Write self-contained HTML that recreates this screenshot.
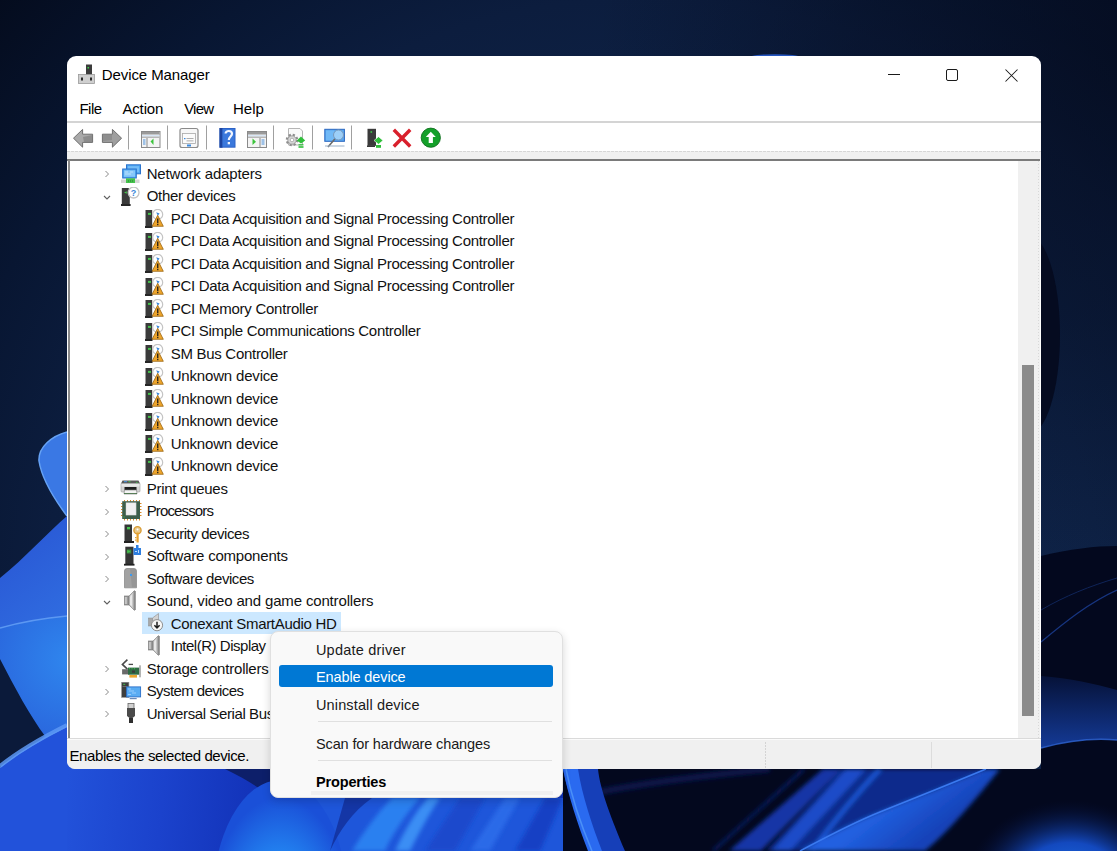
<!DOCTYPE html>
<html><head><meta charset="utf-8">
<style>
html,body{margin:0;padding:0;width:1117px;height:851px;overflow:hidden;background:#0b1a36;font-family:"Liberation Sans", sans-serif;}
.abs{position:absolute}
.t{position:absolute;font-size:14.3px;line-height:22.5px;color:#000;white-space:nowrap}
.mi{position:absolute;font-size:14.3px;color:#1a1a1a;white-space:nowrap;line-height:20px}
.cm{position:absolute;font-size:14.2px;color:#1a1a1a;white-space:nowrap;line-height:20px;left:317px}
</style></head><body>
<div id="wall" class="abs" style="left:0;top:0;width:1117px;height:851px">
<svg width="1117" height="851" viewBox="0 0 1117 851">
<defs>
 <radialGradient id="gTop" cx="650" cy="600" r="900" gradientUnits="userSpaceOnUse">
  <stop offset="0" stop-color="#12284f"/>
  <stop offset="0.5" stop-color="#0e2246"/>
  <stop offset="0.67" stop-color="#0c1d3e"/>
  <stop offset="0.8" stop-color="#081632"/>
  <stop offset="1" stop-color="#040b1c"/>
 </radialGradient>
 <linearGradient id="gB" x1="0" y1="560" x2="67" y2="640" gradientUnits="userSpaceOnUse">
  <stop offset="0" stop-color="#2a5ad6"/>
  <stop offset="1" stop-color="#3170e2"/>
 </linearGradient>
 <radialGradient id="gC" cx="70" cy="660" r="80" gradientUnits="userSpaceOnUse">
  <stop offset="0" stop-color="#2f86ee"/>
  <stop offset="1" stop-color="#2a68de"/>
 </radialGradient>
 <linearGradient id="gD" x1="67" y1="780" x2="260" y2="800" gradientUnits="userSpaceOnUse">
  <stop offset="0" stop-color="#2252da"/>
  <stop offset="0.5" stop-color="#1b42cc"/>
  <stop offset="1" stop-color="#1232b8"/>
 </linearGradient>
 <radialGradient id="gSph" cx="0.5" cy="0.62" r="0.55">
  <stop offset="0" stop-color="#2ab0ff"/>
  <stop offset="0.55" stop-color="#2386f2"/>
  <stop offset="1" stop-color="#1a50d8"/>
 </radialGradient>
 <radialGradient id="gBR" cx="0.5" cy="0.5" r="0.5">
  <stop offset="0" stop-color="#1f7cf0"/>
  <stop offset="0.5" stop-color="#1550d0" stop-opacity="0.9"/>
  <stop offset="1" stop-color="#06103a" stop-opacity="0"/>
 </radialGradient>
 <linearGradient id="gRB" x1="0" y1="676" x2="0" y2="748" gradientUnits="userSpaceOnUse">
  <stop offset="0" stop-color="#061238"/>
  <stop offset="1" stop-color="#143a96"/>
 </linearGradient>
 <linearGradient id="gBand" x1="880" y1="812" x2="910" y2="851" gradientUnits="userSpaceOnUse">
  <stop offset="0" stop-color="#2160e0"/>
  <stop offset="1" stop-color="#1642b8"/>
 </linearGradient>
 <radialGradient id="gRS" cx="1117" cy="60" r="520" gradientUnits="userSpaceOnUse">
  <stop offset="0" stop-color="#040a1c" stop-opacity="0.65"/>
  <stop offset="0.5" stop-color="#040a1c" stop-opacity="0.4"/>
  <stop offset="1" stop-color="#040a1c" stop-opacity="0"/>
 </radialGradient>
 <filter id="blur2" x="-10%" y="-10%" width="120%" height="120%"><feGaussianBlur stdDeviation="2"/></filter>
</defs>
<rect width="1117" height="851" fill="url(#gTop)"/>
<!-- right strip darker lower -->
<rect x="500" y="0" width="617" height="600" fill="url(#gRS)"/>
<ellipse cx="1028" cy="335" rx="32" ry="100" fill="#050b20"/>
<path d="M1041 556 C1070 549 1095 546 1117 546 L1117 851 L1041 851 Z" fill="#03081e"/>
<path d="M1041 642 C1065 622 1090 602 1117 590" fill="none" stroke="#173580" stroke-width="1.3"/>
<path d="M1041 610 C1065 596 1090 586 1117 578" fill="none" stroke="#0f2458" stroke-width="1"/>
<path d="M1041 676 C1070 678 1095 684 1117 690 L1117 740 C1095 738 1070 740 1041 748 Z" fill="url(#gRB)"/>
<path d="M1041 748 C1070 740 1095 738 1117 740" fill="none" stroke="#2f66d8" stroke-width="1.4" opacity="0.8"/>
<!-- left petals -->
<path d="M67 432 C52 436 38 447 39 461 C42 480 55 500 67 516 Z" fill="#3a78e4"/>
<path d="M67 432 C52 436 38 447 39 461 C42 480 55 500 67 516" fill="none" stroke="#66a2f4" stroke-width="1.5"/>
<path d="M0 578 C25 558 48 532 67 516 L67 640 L0 640 Z" fill="url(#gB)"/>
<path d="M0 628 C25 621 45 618 67 616 L67 740 L0 740 Z" fill="url(#gC)"/>
<path d="M0 628 C25 621 45 618 67 616" fill="none" stroke="#5c98f2" stroke-width="1.5"/>
<path d="M0 659 C15 688 30 716 45 736 L0 770 Z" fill="#0b1a3a"/>
<path d="M0 768 C20 752 45 738 67 727 L67 851 L0 851 Z" fill="#2050d8"/>
<path d="M0 768 C20 752 45 738 67 727" fill="none" stroke="#5a96f2" stroke-width="2"/>

<!-- bottom strip -->
<rect x="67" y="740" width="533" height="111" fill="url(#gD)"/>
<path d="M0 768 C20 752 45 738 67 727 L67 851 L0 851 Z" fill="#2252da"/>
<path d="M0 766 C20 750 45 736 67 725" fill="none" stroke="#5c98f4" stroke-width="4" opacity="0.85"/>
<path d="M225 769 L275 769 L275 800 C262 790 248 780 225 769 Z" fill="#0d1f6a"/>
<rect x="315" y="798" width="248" height="53" fill="#1e56da"/>
<g filter="url(#blur2)">
<path d="M352 851 C365 830 378 812 392 798 L420 798 C405 815 392 835 385 851 Z" fill="#2c80f0"/>
<path d="M395 851 C405 830 415 812 428 798 L440 798 C428 815 418 835 410 851 Z" fill="#3a8ef4"/>
<path d="M425 851 L460 798 L485 798 L455 851 Z" fill="#1a48cc"/>
<path d="M470 851 L505 798 L520 798 L490 851 Z" fill="#2a6ae8"/>
<path d="M515 851 L545 798 L563 798 L540 851 Z" fill="#1840c4"/>
</g>
<ellipse cx="280" cy="905" rx="68" ry="125" fill="url(#gSph)"/>
<path d="M330 851 C340 830 352 812 372 798 L345 798 Z" fill="#0f2a90" opacity="0.7"/>
<!-- right of menu -->
<rect x="563" y="769" width="478" height="82" fill="#03081e"/>
<g filter="url(#blur2)">
<path d="M600 792 C650 782 700 776 770 769" stroke="#0a1a58" stroke-width="7" opacity="0.7" fill="none"/>
<path d="M713 851 L804 769" stroke="#0c2270" stroke-width="2.5" fill="none"/>
<path d="M729 851 L823 769 L842 769 L761 851 Z" fill="#1236a6"/>
<path d="M766 851 L842 769 L986 769 L880 812 L800 851 Z" fill="#0e2c8c"/>
<path d="M772 851 L846 769 L866 769 L790 851 Z" fill="#1a4cc8"/>
<path d="M880 769 C860 790 835 820 812 851" stroke="#1f58d8" stroke-width="4" fill="none"/>
<path d="M800 851 C830 835 855 822 880 812 C920 796 955 782 986 769 L1000 769 C975 800 950 830 925 851 Z" fill="url(#gBand)"/>
</g>
<path d="M800 851 C830 835 855 822 880 812 C920 796 955 782 986 769" fill="none" stroke="#3a7af0" stroke-width="1.5"/>
<ellipse cx="1070" cy="885" rx="105" ry="85" fill="url(#gBR)"/>
<path d="M563 769 C568 795 580 825 590 851 L625 851 C612 820 600 790 598 769 Z" fill="#163fb8"/>
<path d="M563 769 C568 795 578 825 588 851 L602 851 C592 825 582 795 578 769 Z" fill="#2a6af0"/>
<path d="M566 769 C571 795 581 825 592 851" fill="none" stroke="#4a90f8" stroke-width="1.5"/>
<!-- glow above window -->
<ellipse cx="775" cy="57" rx="25" ry="2.8" fill="#2a62d8" opacity="0.85"/>
</svg>
</div>

<div id="win" class="abs" style="left:67px;top:56px;width:974px;height:713px;background:#fff;border-radius:9px;overflow:hidden">
</div>
<!-- window content in page coords -->
<div class="abs" style="left:0;top:0;width:1117px;height:851px">
  <!-- title icon -->
  <div class="abs" style="left:78px;top:64px;line-height:0">
  <svg width="17" height="20" viewBox="0 0 17 20">
   <rect x="8" y="0.5" width="6" height="11" fill="#3c3c3c"/>
   <rect x="9.5" y="3" width="1.5" height="1.5" fill="#3fd04a"/>
   <rect x="0.5" y="10.5" width="16" height="9" fill="#cfcfcf" stroke="#9a9a9a" stroke-width="0.8"/>
   <rect x="3" y="13.5" width="2" height="3" fill="#2a2a2a"/>
   <rect x="12" y="13.5" width="2" height="3" fill="#2a2a2a"/>
  </svg></div>
  <div style="position:absolute;left:101.75px;top:64.50px;font-size:15px;font-weight:400;line-height:20px;letter-spacing:-0.088px;color:#000;white-space:nowrap">Device Manager</div>
  <!-- caption buttons -->
  <svg class="abs" style="left:880px;top:60px" width="150" height="30" viewBox="0 0 150 30">
    <path d="M8 14.5 H20" stroke="#1a1a1a" stroke-width="1"/>
    <rect x="66.5" y="9.5" width="11" height="11" rx="1.5" fill="none" stroke="#1a1a1a" stroke-width="1"/>
    <path d="M125.5 9.5 L137.5 21.5 M137.5 9.5 L125.5 21.5" stroke="#1a1a1a" stroke-width="1.05"/>
  </svg>
  <!-- menu -->
  <div style="position:absolute;left:79.40px;top:98.50px;font-size:15px;font-weight:400;line-height:20px;letter-spacing:-0.500px;color:#000;white-space:nowrap">File</div><div style="position:absolute;left:122.40px;top:98.50px;font-size:15px;font-weight:400;line-height:20px;letter-spacing:-0.140px;color:#000;white-space:nowrap">Action</div><div style="position:absolute;left:184.20px;top:98.50px;font-size:15px;font-weight:400;line-height:20px;letter-spacing:-0.800px;color:#000;white-space:nowrap">View</div><div style="position:absolute;left:233.00px;top:98.50px;font-size:15px;font-weight:400;line-height:20px;letter-spacing:0.000px;color:#000;white-space:nowrap">Help</div>
  <div class="abs" style="left:67px;top:121px;width:974px;height:2px;background:#d4d4d4"></div>
  <!-- toolbar -->
  <svg style="position:absolute;left:0;top:0" width="460" height="160" viewBox="0 0 460 160">
<!-- separators -->
<g fill="#a0a0a0">
<rect x="128" y="125.5" width="1" height="24"/>
<rect x="167" y="125.5" width="1" height="24"/>
<rect x="206" y="125.5" width="1" height="24"/>
<rect x="273" y="125.5" width="1" height="24"/>
<rect x="312" y="125.5" width="1" height="24"/>
<rect x="351" y="125.5" width="1" height="24"/>
</g>
<!-- back arrow -->
<path d="M73.5 138.2 L82.6 129.4 L82.6 134.2 L92.6 134.2 L92.6 142.4 L82.6 142.4 L82.6 147.2 Z" fill="#a9a9a9" stroke="#6f6f6f" stroke-width="1" stroke-linejoin="round"/>
<path d="M83 137 L92 135 L92 142 L84 142 Z" fill="#7a7a7a" opacity="0.6"/>
<!-- forward arrow -->
<path d="M121.6 138.2 L112.4 129.4 L112.4 134.2 L102.4 134.2 L102.4 142.4 L112.4 142.4 L112.4 147.2 Z" fill="#9f9f9f" stroke="#6f6f6f" stroke-width="1" stroke-linejoin="round"/>
<path d="M103 135 L112 135 L112 140 L103 141 Z" fill="#7d7d7d" opacity="0.5"/>
<!-- show/hide tree -->
<rect x="141.5" y="131.5" width="18.5" height="16" fill="#f4f4f4" stroke="#8a8a8a" stroke-width="1"/>
<rect x="142" y="132" width="17.5" height="2.5" fill="#9a9a9a"/>
<rect x="142" y="135" width="17.5" height="1.5" fill="#d8e6f5"/>
<rect x="142" y="136.5" width="17.5" height="1.5" fill="#b8b8b8"/>
<rect x="146.5" y="138" width="1" height="9.5" fill="#8a8a8a"/>
<rect x="143" y="139.5" width="2.5" height="1" fill="#4a90d9"/>
<rect x="143" y="141.5" width="2.5" height="1" fill="#4a90d9"/>
<rect x="143" y="143.5" width="2.5" height="1" fill="#4a90d9"/>
<path d="M150.5 141.5 L153.5 138.5 L153.5 145 Z" fill="#3cc43c"/>
<!-- properties -->
<rect x="180" y="128.5" width="18" height="19" rx="2" fill="#f7f7f7" stroke="#8a8a8a" stroke-width="1.2"/>
<rect x="182.5" y="133.5" width="13" height="10" fill="#fbfbfb" stroke="#a8a8a8" stroke-width="0.8"/>
<rect x="184" y="138" width="1.5" height="1.2" fill="#3a8ae0"/>
<rect x="186.5" y="138.2" width="7" height="0.8" fill="#9a9a9a"/>
<rect x="186.5" y="140.5" width="7" height="0.8" fill="#9a9a9a"/>
<rect x="187" y="144.5" width="4" height="2" fill="#3a8ae0"/>
<!-- help book -->
<rect x="219.5" y="128" width="16" height="19.7" fill="#2d62c6"/>
<rect x="219.5" y="128" width="3" height="19.7" fill="#1c44a0"/>
<rect x="222.5" y="129" width="12" height="17.7" fill="#3a78dc"/>
<path d="M225.6 133.5 C225.6 130.2 232 130 232 133.8 C232 136.4 228.8 136.6 228.8 140" fill="none" stroke="#f2f6ff" stroke-width="2.2"/>
<rect x="227.7" y="142" width="2.3" height="2.3" fill="#f2f6ff"/>
<!-- action pane -->
<rect x="247.5" y="131.5" width="19" height="16" fill="#f4f4f4" stroke="#8a8a8a" stroke-width="1"/>
<rect x="248" y="132" width="18" height="2.5" fill="#9a9a9a"/>
<rect x="248" y="135" width="18" height="1.5" fill="#d8e6f5"/>
<rect x="248" y="136.5" width="18" height="1.5" fill="#b8b8b8"/>
<rect x="259.5" y="138" width="1" height="9.5" fill="#8a8a8a"/>
<rect x="261.5" y="139.5" width="3" height="1" fill="#4a90d9"/>
<rect x="261.5" y="141.5" width="3" height="1" fill="#4a90d9"/>
<rect x="261.5" y="143.5" width="3" height="1" fill="#4a90d9"/>
<path d="M252.5 138.5 L256 141.8 L252.5 145 Z" fill="#3cc43c"/>
<!-- gear + doc -->
<path d="M288.5 128.5 H300 L302.5 131 V145 H288.5 Z" fill="#fafafa" stroke="#b5b5b5" stroke-width="1"/>
<g transform="translate(292 140)">
<circle r="5.2" fill="none" stroke="#8e8e8e" stroke-width="2.2" stroke-dasharray="2.2 1.9"/>
<circle r="4.2" fill="#d8d8d8" stroke="#8e8e8e" stroke-width="0.8"/>
<circle r="1.8" fill="#fff" stroke="#9a9a9a" stroke-width="0.7"/>
</g>
<path d="M301 136.5 L305.2 140.5 L301 143.5 L296.8 140.5 Z" fill="#2fbf3a"/>
<rect x="298.5" y="144.2" width="5" height="1.2" fill="#2fbf3a"/>
<rect x="298.5" y="146.2" width="5" height="1.6" fill="#2fbf3a"/>
<!-- monitor + magnifier -->
<rect x="324.8" y="129.3" width="19.6" height="12" fill="#5aa8f0" stroke="#2a66c0" stroke-width="1"/>
<rect x="326" y="130.5" width="8" height="10" fill="#7ac0f8" opacity="0.7"/>
<circle cx="338.5" cy="135" r="5" fill="#9ccff8" stroke="#7a9abb" stroke-width="1"/>
<path d="M334.8 139 L328 147" stroke="#6a6a6a" stroke-width="1.6"/>
<rect x="325" y="145.5" width="19.5" height="1" fill="#9ab0c8"/>
<!-- update driver -->
<rect x="367.5" y="128.8" width="8.5" height="17" fill="#3a3a3a"/>
<rect x="367" y="145.5" width="8" height="1.4" fill="#222"/>
<rect x="370.5" y="131.2" width="1.6" height="1.6" fill="#3fd04a"/>
<path d="M378.5 136.7 L383 140.5 L378.5 144.2 L374 140.5 Z" fill="#2fbf3a" stroke="#fff" stroke-width="0.6"/>
<rect x="376" y="145" width="5" height="2.8" fill="#2fbf3a"/>
<!-- red X -->
<path d="M395 131 L409 145.3 M409 131 L395 145.3" stroke="#d9202c" stroke-width="3.4" stroke-linecap="square"/>
<!-- green up circle -->
<circle cx="430.8" cy="137.7" r="9.6" fill="#14a02a" stroke="#0d6d1c" stroke-width="0.9"/>
<path d="M430.8 131.8 L435.8 137 H432.9 V142.9 H428.7 V137 H425.8 Z" fill="#fff"/>
</svg>
  <div class="abs" style="left:67px;top:151px;width:974px;height:1px;background:repeating-linear-gradient(90deg,#d6d6d6 0 3px,#f0f0f0 3px 4px)"></div>
  <div class="abs" style="left:67px;top:152px;width:974px;height:8px;background:#f0f0f0"></div>
  <div class="abs" style="left:67px;top:159px;width:973px;height:2px;background:#7a7a7a"></div>
  <!-- tree left border -->
  <div class="abs" style="left:68px;top:160px;width:2px;height:579px;background:#8a8a8a"></div>
  <!-- scrollbar -->
  <div class="abs" style="left:1018px;top:161px;width:22px;height:577px;background:#f0f0f0"></div><div class="abs" style="left:1038px;top:161px;width:1px;height:577px;background:repeating-linear-gradient(180deg,#d8d8d8 0 1px,#f0f0f0 1px 3px)"></div>
  <div class="abs" style="left:1022px;top:365px;width:12px;height:351px;background:#8b8b8b"></div>
  <!-- tree -->
  <svg style="position:absolute;left:103px;top:169.0px" width="8" height="10" viewBox="0 0 8 10"><path d="M2.5 2 L5.5 5 L2.5 8" fill="none" stroke="#8a8a8a" stroke-width="1"/></svg>
<div style="position:absolute;left:121px;top:163.5px;line-height:0"><svg width="22" height="20" viewBox="0 0 22 20">
<rect x="5.5" y="0.8" width="14" height="9" fill="#4ea6f2" stroke="#2b73cc" stroke-width="1"/>
<rect x="7" y="2.2" width="11" height="6" fill="#74bdf7"/>
<rect x="1.7" y="5" width="13.6" height="9" fill="#52a8f2" stroke="#2b73cc" stroke-width="1"/>
<rect x="3" y="6.3" width="11" height="6.5" fill="#86c8fa"/>
<path d="M4 8 h3 M4 10 h6 M9 8 h3" stroke="#c8e6ff" stroke-width="0.8"/>
<rect x="0" y="15.5" width="18.5" height="3.5" fill="#d6d6d6"/>
<rect x="5" y="14.3" width="9" height="4.7" fill="#45c24c"/>
<rect x="7" y="16.5" width="1" height="1" fill="#2a7a2e"/><rect x="9" y="16.5" width="1" height="1" fill="#2a7a2e"/><rect x="11" y="16.5" width="1" height="1" fill="#2a7a2e"/>
</svg></div>
<div style="position:absolute;left:146.70px;top:163.90px;font-size:15px;font-weight:400;line-height:20px;letter-spacing:-0.147px;color:#111;white-space:nowrap">Network adapters</div>
<svg style="position:absolute;left:102px;top:193.5px" width="10" height="8" viewBox="0 0 10 8"><path d="M2 2 L5 5 L8 2" fill="none" stroke="#606060" stroke-width="1.1"/></svg>
<div style="position:absolute;left:121px;top:186.5px;line-height:0"><svg width="20" height="20" viewBox="0 0 20 20">
<path d="M0.8 1 H7.5 L8.8 3 V17.5 H0.8 Z" fill="#3a3a3a"/>
<rect x="0" y="17" width="9.6" height="2" fill="#262626"/>
<path d="M3 5.5 L5.8 4.3 V6.7 Z" fill="#45c24c"/>
<circle cx="12.6" cy="5.6" r="5.4" fill="#fff" stroke="#c4c4c4" stroke-width="1.3"/>
<text x="12.6" y="9" font-family="Liberation Sans" font-size="9" font-weight="700" fill="#3a86d8" text-anchor="middle">?</text>
</svg></div>
<div style="position:absolute;left:146.70px;top:186.40px;font-size:15px;font-weight:400;line-height:20px;letter-spacing:-0.292px;color:#111;white-space:nowrap">Other devices</div>
<div style="position:absolute;left:145px;top:209.0px;line-height:0"><svg width="20" height="20" viewBox="0 0 20 20">
<path d="M0.5 1 H7.2 V17.5 H0.5 Z" fill="#3a3a3a"/>
<rect x="0" y="17" width="7.5" height="2" fill="#262626"/>
<rect x="3" y="3.9" width="3" height="2" fill="#45c24c"/>
<circle cx="12.7" cy="5.4" r="5" fill="#fff" stroke="#c4c4c4" stroke-width="1.2"/>
<path d="M11.2 3.2 L14.6 4.4 L12.8 6.8 Z" fill="#3a86d8"/>
<path d="M12.7 6.3 L18.3 17.3 H7.1 Z" fill="#eea52c" stroke="#9a6410" stroke-width="0.8" stroke-linejoin="round"/>
<rect x="12.1" y="9.5" width="1.3" height="4.6" fill="#1a1a1a"/>
<rect x="12.1" y="14.8" width="1.3" height="1.4" fill="#1a1a1a"/>
</svg></div>
<div style="position:absolute;left:170.70px;top:208.90px;font-size:15px;font-weight:400;line-height:20px;letter-spacing:-0.300px;color:#111;white-space:nowrap">PCI Data Acquisition and Signal Processing Controller</div>
<div style="position:absolute;left:145px;top:231.5px;line-height:0"><svg width="20" height="20" viewBox="0 0 20 20">
<path d="M0.5 1 H7.2 V17.5 H0.5 Z" fill="#3a3a3a"/>
<rect x="0" y="17" width="7.5" height="2" fill="#262626"/>
<rect x="3" y="3.9" width="3" height="2" fill="#45c24c"/>
<circle cx="12.7" cy="5.4" r="5" fill="#fff" stroke="#c4c4c4" stroke-width="1.2"/>
<path d="M11.2 3.2 L14.6 4.4 L12.8 6.8 Z" fill="#3a86d8"/>
<path d="M12.7 6.3 L18.3 17.3 H7.1 Z" fill="#eea52c" stroke="#9a6410" stroke-width="0.8" stroke-linejoin="round"/>
<rect x="12.1" y="9.5" width="1.3" height="4.6" fill="#1a1a1a"/>
<rect x="12.1" y="14.8" width="1.3" height="1.4" fill="#1a1a1a"/>
</svg></div>
<div style="position:absolute;left:170.70px;top:231.40px;font-size:15px;font-weight:400;line-height:20px;letter-spacing:-0.300px;color:#111;white-space:nowrap">PCI Data Acquisition and Signal Processing Controller</div>
<div style="position:absolute;left:145px;top:254.0px;line-height:0"><svg width="20" height="20" viewBox="0 0 20 20">
<path d="M0.5 1 H7.2 V17.5 H0.5 Z" fill="#3a3a3a"/>
<rect x="0" y="17" width="7.5" height="2" fill="#262626"/>
<rect x="3" y="3.9" width="3" height="2" fill="#45c24c"/>
<circle cx="12.7" cy="5.4" r="5" fill="#fff" stroke="#c4c4c4" stroke-width="1.2"/>
<path d="M11.2 3.2 L14.6 4.4 L12.8 6.8 Z" fill="#3a86d8"/>
<path d="M12.7 6.3 L18.3 17.3 H7.1 Z" fill="#eea52c" stroke="#9a6410" stroke-width="0.8" stroke-linejoin="round"/>
<rect x="12.1" y="9.5" width="1.3" height="4.6" fill="#1a1a1a"/>
<rect x="12.1" y="14.8" width="1.3" height="1.4" fill="#1a1a1a"/>
</svg></div>
<div style="position:absolute;left:170.70px;top:253.90px;font-size:15px;font-weight:400;line-height:20px;letter-spacing:-0.300px;color:#111;white-space:nowrap">PCI Data Acquisition and Signal Processing Controller</div>
<div style="position:absolute;left:145px;top:276.5px;line-height:0"><svg width="20" height="20" viewBox="0 0 20 20">
<path d="M0.5 1 H7.2 V17.5 H0.5 Z" fill="#3a3a3a"/>
<rect x="0" y="17" width="7.5" height="2" fill="#262626"/>
<rect x="3" y="3.9" width="3" height="2" fill="#45c24c"/>
<circle cx="12.7" cy="5.4" r="5" fill="#fff" stroke="#c4c4c4" stroke-width="1.2"/>
<path d="M11.2 3.2 L14.6 4.4 L12.8 6.8 Z" fill="#3a86d8"/>
<path d="M12.7 6.3 L18.3 17.3 H7.1 Z" fill="#eea52c" stroke="#9a6410" stroke-width="0.8" stroke-linejoin="round"/>
<rect x="12.1" y="9.5" width="1.3" height="4.6" fill="#1a1a1a"/>
<rect x="12.1" y="14.8" width="1.3" height="1.4" fill="#1a1a1a"/>
</svg></div>
<div style="position:absolute;left:170.70px;top:276.40px;font-size:15px;font-weight:400;line-height:20px;letter-spacing:-0.300px;color:#111;white-space:nowrap">PCI Data Acquisition and Signal Processing Controller</div>
<div style="position:absolute;left:145px;top:299.0px;line-height:0"><svg width="20" height="20" viewBox="0 0 20 20">
<path d="M0.5 1 H7.2 V17.5 H0.5 Z" fill="#3a3a3a"/>
<rect x="0" y="17" width="7.5" height="2" fill="#262626"/>
<rect x="3" y="3.9" width="3" height="2" fill="#45c24c"/>
<circle cx="12.7" cy="5.4" r="5" fill="#fff" stroke="#c4c4c4" stroke-width="1.2"/>
<path d="M11.2 3.2 L14.6 4.4 L12.8 6.8 Z" fill="#3a86d8"/>
<path d="M12.7 6.3 L18.3 17.3 H7.1 Z" fill="#eea52c" stroke="#9a6410" stroke-width="0.8" stroke-linejoin="round"/>
<rect x="12.1" y="9.5" width="1.3" height="4.6" fill="#1a1a1a"/>
<rect x="12.1" y="14.8" width="1.3" height="1.4" fill="#1a1a1a"/>
</svg></div>
<div style="position:absolute;left:170.70px;top:298.90px;font-size:15px;font-weight:400;line-height:20px;letter-spacing:-0.250px;color:#111;white-space:nowrap">PCI Memory Controller</div>
<div style="position:absolute;left:145px;top:321.5px;line-height:0"><svg width="20" height="20" viewBox="0 0 20 20">
<path d="M0.5 1 H7.2 V17.5 H0.5 Z" fill="#3a3a3a"/>
<rect x="0" y="17" width="7.5" height="2" fill="#262626"/>
<rect x="3" y="3.9" width="3" height="2" fill="#45c24c"/>
<circle cx="12.7" cy="5.4" r="5" fill="#fff" stroke="#c4c4c4" stroke-width="1.2"/>
<path d="M11.2 3.2 L14.6 4.4 L12.8 6.8 Z" fill="#3a86d8"/>
<path d="M12.7 6.3 L18.3 17.3 H7.1 Z" fill="#eea52c" stroke="#9a6410" stroke-width="0.8" stroke-linejoin="round"/>
<rect x="12.1" y="9.5" width="1.3" height="4.6" fill="#1a1a1a"/>
<rect x="12.1" y="14.8" width="1.3" height="1.4" fill="#1a1a1a"/>
</svg></div>
<div style="position:absolute;left:170.70px;top:321.40px;font-size:15px;font-weight:400;line-height:20px;letter-spacing:-0.286px;color:#111;white-space:nowrap">PCI Simple Communications Controller</div>
<div style="position:absolute;left:145px;top:344.0px;line-height:0"><svg width="20" height="20" viewBox="0 0 20 20">
<path d="M0.5 1 H7.2 V17.5 H0.5 Z" fill="#3a3a3a"/>
<rect x="0" y="17" width="7.5" height="2" fill="#262626"/>
<rect x="3" y="3.9" width="3" height="2" fill="#45c24c"/>
<circle cx="12.7" cy="5.4" r="5" fill="#fff" stroke="#c4c4c4" stroke-width="1.2"/>
<path d="M11.2 3.2 L14.6 4.4 L12.8 6.8 Z" fill="#3a86d8"/>
<path d="M12.7 6.3 L18.3 17.3 H7.1 Z" fill="#eea52c" stroke="#9a6410" stroke-width="0.8" stroke-linejoin="round"/>
<rect x="12.1" y="9.5" width="1.3" height="4.6" fill="#1a1a1a"/>
<rect x="12.1" y="14.8" width="1.3" height="1.4" fill="#1a1a1a"/>
</svg></div>
<div style="position:absolute;left:170.70px;top:343.90px;font-size:15px;font-weight:400;line-height:20px;letter-spacing:-0.287px;color:#111;white-space:nowrap">SM Bus Controller</div>
<div style="position:absolute;left:145px;top:366.5px;line-height:0"><svg width="20" height="20" viewBox="0 0 20 20">
<path d="M0.5 1 H7.2 V17.5 H0.5 Z" fill="#3a3a3a"/>
<rect x="0" y="17" width="7.5" height="2" fill="#262626"/>
<rect x="3" y="3.9" width="3" height="2" fill="#45c24c"/>
<circle cx="12.7" cy="5.4" r="5" fill="#fff" stroke="#c4c4c4" stroke-width="1.2"/>
<path d="M11.2 3.2 L14.6 4.4 L12.8 6.8 Z" fill="#3a86d8"/>
<path d="M12.7 6.3 L18.3 17.3 H7.1 Z" fill="#eea52c" stroke="#9a6410" stroke-width="0.8" stroke-linejoin="round"/>
<rect x="12.1" y="9.5" width="1.3" height="4.6" fill="#1a1a1a"/>
<rect x="12.1" y="14.8" width="1.3" height="1.4" fill="#1a1a1a"/>
</svg></div>
<div style="position:absolute;left:170.70px;top:366.40px;font-size:15px;font-weight:400;line-height:20px;letter-spacing:-0.177px;color:#111;white-space:nowrap">Unknown device</div>
<div style="position:absolute;left:145px;top:389.0px;line-height:0"><svg width="20" height="20" viewBox="0 0 20 20">
<path d="M0.5 1 H7.2 V17.5 H0.5 Z" fill="#3a3a3a"/>
<rect x="0" y="17" width="7.5" height="2" fill="#262626"/>
<rect x="3" y="3.9" width="3" height="2" fill="#45c24c"/>
<circle cx="12.7" cy="5.4" r="5" fill="#fff" stroke="#c4c4c4" stroke-width="1.2"/>
<path d="M11.2 3.2 L14.6 4.4 L12.8 6.8 Z" fill="#3a86d8"/>
<path d="M12.7 6.3 L18.3 17.3 H7.1 Z" fill="#eea52c" stroke="#9a6410" stroke-width="0.8" stroke-linejoin="round"/>
<rect x="12.1" y="9.5" width="1.3" height="4.6" fill="#1a1a1a"/>
<rect x="12.1" y="14.8" width="1.3" height="1.4" fill="#1a1a1a"/>
</svg></div>
<div style="position:absolute;left:170.70px;top:388.90px;font-size:15px;font-weight:400;line-height:20px;letter-spacing:-0.177px;color:#111;white-space:nowrap">Unknown device</div>
<div style="position:absolute;left:145px;top:411.5px;line-height:0"><svg width="20" height="20" viewBox="0 0 20 20">
<path d="M0.5 1 H7.2 V17.5 H0.5 Z" fill="#3a3a3a"/>
<rect x="0" y="17" width="7.5" height="2" fill="#262626"/>
<rect x="3" y="3.9" width="3" height="2" fill="#45c24c"/>
<circle cx="12.7" cy="5.4" r="5" fill="#fff" stroke="#c4c4c4" stroke-width="1.2"/>
<path d="M11.2 3.2 L14.6 4.4 L12.8 6.8 Z" fill="#3a86d8"/>
<path d="M12.7 6.3 L18.3 17.3 H7.1 Z" fill="#eea52c" stroke="#9a6410" stroke-width="0.8" stroke-linejoin="round"/>
<rect x="12.1" y="9.5" width="1.3" height="4.6" fill="#1a1a1a"/>
<rect x="12.1" y="14.8" width="1.3" height="1.4" fill="#1a1a1a"/>
</svg></div>
<div style="position:absolute;left:170.70px;top:411.40px;font-size:15px;font-weight:400;line-height:20px;letter-spacing:-0.177px;color:#111;white-space:nowrap">Unknown device</div>
<div style="position:absolute;left:145px;top:434.0px;line-height:0"><svg width="20" height="20" viewBox="0 0 20 20">
<path d="M0.5 1 H7.2 V17.5 H0.5 Z" fill="#3a3a3a"/>
<rect x="0" y="17" width="7.5" height="2" fill="#262626"/>
<rect x="3" y="3.9" width="3" height="2" fill="#45c24c"/>
<circle cx="12.7" cy="5.4" r="5" fill="#fff" stroke="#c4c4c4" stroke-width="1.2"/>
<path d="M11.2 3.2 L14.6 4.4 L12.8 6.8 Z" fill="#3a86d8"/>
<path d="M12.7 6.3 L18.3 17.3 H7.1 Z" fill="#eea52c" stroke="#9a6410" stroke-width="0.8" stroke-linejoin="round"/>
<rect x="12.1" y="9.5" width="1.3" height="4.6" fill="#1a1a1a"/>
<rect x="12.1" y="14.8" width="1.3" height="1.4" fill="#1a1a1a"/>
</svg></div>
<div style="position:absolute;left:170.70px;top:433.90px;font-size:15px;font-weight:400;line-height:20px;letter-spacing:-0.177px;color:#111;white-space:nowrap">Unknown device</div>
<div style="position:absolute;left:145px;top:456.5px;line-height:0"><svg width="20" height="20" viewBox="0 0 20 20">
<path d="M0.5 1 H7.2 V17.5 H0.5 Z" fill="#3a3a3a"/>
<rect x="0" y="17" width="7.5" height="2" fill="#262626"/>
<rect x="3" y="3.9" width="3" height="2" fill="#45c24c"/>
<circle cx="12.7" cy="5.4" r="5" fill="#fff" stroke="#c4c4c4" stroke-width="1.2"/>
<path d="M11.2 3.2 L14.6 4.4 L12.8 6.8 Z" fill="#3a86d8"/>
<path d="M12.7 6.3 L18.3 17.3 H7.1 Z" fill="#eea52c" stroke="#9a6410" stroke-width="0.8" stroke-linejoin="round"/>
<rect x="12.1" y="9.5" width="1.3" height="4.6" fill="#1a1a1a"/>
<rect x="12.1" y="14.8" width="1.3" height="1.4" fill="#1a1a1a"/>
</svg></div>
<div style="position:absolute;left:170.70px;top:456.40px;font-size:15px;font-weight:400;line-height:20px;letter-spacing:-0.177px;color:#111;white-space:nowrap">Unknown device</div>
<svg style="position:absolute;left:103px;top:484.0px" width="8" height="10" viewBox="0 0 8 10"><path d="M2.5 2 L5.5 5 L2.5 8" fill="none" stroke="#8a8a8a" stroke-width="1"/></svg>
<div style="position:absolute;left:120px;top:479.5px;line-height:0"><svg width="22" height="16" viewBox="0 0 22 16">
<path d="M2.5 0.5 H18.5 L20 3.5 H1 Z" fill="#5a5a5a"/>
<rect x="4" y="1.2" width="3" height="1" fill="#4a9ae8"/><rect x="8.5" y="1.2" width="2" height="1" fill="#45c24c"/><rect x="16" y="2.2" width="1.5" height="1" fill="#45c24c"/>
<path d="M1 3.5 H20 V11 Q20 12 19 12 H2 Q1 12 1 11 Z" fill="#d4d4d4" stroke="#9a9a9a" stroke-width="0.6"/>
<rect x="1.5" y="4" width="18" height="2.5" fill="#e8e8e8"/>
<rect x="4.5" y="7" width="12" height="3" fill="#1e1e1e"/>
<path d="M4.5 10 H16.5 L17 14 H4 Z" fill="#f4f4f4" stroke="#7a7a7a" stroke-width="0.6"/>
<rect x="4" y="13.2" width="13" height="0.8" fill="#3a6a3a"/>
</svg></div>
<div style="position:absolute;left:146.70px;top:478.90px;font-size:15px;font-weight:400;line-height:20px;letter-spacing:-0.273px;color:#111;white-space:nowrap">Print queues</div>
<svg style="position:absolute;left:103px;top:506.5px" width="8" height="10" viewBox="0 0 8 10"><path d="M2.5 2 L5.5 5 L2.5 8" fill="none" stroke="#8a8a8a" stroke-width="1"/></svg>
<div style="position:absolute;left:120.5px;top:499.5px;line-height:0"><svg width="21" height="21" viewBox="0 0 21 21">
<g fill="#d88a2a">
<rect x="3" y="0" width="1" height="1.5"/><rect x="6" y="0" width="1" height="1.5"/><rect x="9" y="0" width="1" height="1.5"/><rect x="12" y="0" width="1" height="1.5"/><rect x="15" y="0" width="1" height="1.5"/><rect x="18" y="0" width="1" height="1.5"/>
<rect x="3" y="19" width="1" height="1.5"/><rect x="6" y="19" width="1" height="1.5"/><rect x="9" y="19" width="1" height="1.5"/><rect x="12" y="19" width="1" height="1.5"/><rect x="15" y="19" width="1" height="1.5"/><rect x="18" y="19" width="1" height="1.5"/>
<rect x="0" y="3" width="1.5" height="1"/><rect x="0" y="6" width="1.5" height="1"/><rect x="0" y="9" width="1.5" height="1"/><rect x="0" y="12" width="1.5" height="1"/><rect x="0" y="15" width="1.5" height="1"/>
<rect x="19" y="3" width="1.5" height="1"/><rect x="19" y="6" width="1.5" height="1"/><rect x="19" y="9" width="1.5" height="1"/><rect x="19" y="12" width="1.5" height="1"/><rect x="19" y="15" width="1.5" height="1"/>
</g>
<rect x="1.2" y="1.2" width="17.8" height="17.8" fill="#3d5e4a"/>
<rect x="4.8" y="2.5" width="10.5" height="12.8" fill="#e2e2e2"/>
<rect x="5.5" y="3.2" width="9" height="11.4" fill="#f0f0f0"/>
<rect x="2.5" y="16.5" width="1" height="1" fill="#45c24c"/>
</svg></div>
<div style="position:absolute;left:146.70px;top:501.40px;font-size:15px;font-weight:400;line-height:20px;letter-spacing:-0.867px;color:#111;white-space:nowrap">Processors</div>
<svg style="position:absolute;left:103px;top:529.0px" width="8" height="10" viewBox="0 0 8 10"><path d="M2.5 2 L5.5 5 L2.5 8" fill="none" stroke="#8a8a8a" stroke-width="1"/></svg>
<div style="position:absolute;left:123.5px;top:523.5px;line-height:0"><svg width="18" height="20" viewBox="0 0 18 20">
<path d="M0.5 0.5 H8 V17 H0.5 Z" fill="#363636"/>
<rect x="0" y="17" width="10" height="2" fill="#222"/>
<rect x="3" y="3" width="3" height="2.4" fill="#45c24c"/>
<circle cx="13.5" cy="6.3" r="3.6" fill="#e9c98c" stroke="#d99a30" stroke-width="1.3"/>
<circle cx="13.5" cy="5.6" r="1" fill="#fff"/>
<rect x="12.5" y="8.5" width="2.2" height="10" fill="#e8a22e"/>
<rect x="11" y="13" width="1.5" height="1.2" fill="#e8a22e"/><rect x="11" y="15.5" width="1.5" height="1.2" fill="#e8a22e"/>
</svg></div>
<div style="position:absolute;left:146.70px;top:523.90px;font-size:15px;font-weight:400;line-height:20px;letter-spacing:-0.433px;color:#111;white-space:nowrap">Security devices</div>
<svg style="position:absolute;left:103px;top:551.5px" width="8" height="10" viewBox="0 0 8 10"><path d="M2.5 2 L5.5 5 L2.5 8" fill="none" stroke="#8a8a8a" stroke-width="1"/></svg>
<div style="position:absolute;left:124px;top:545.0px;line-height:0"><svg width="18" height="21" viewBox="0 0 18 21">
<path d="M1.3 1.7 H9.5 V19.5 H1.3 Z" fill="#363636"/>
<rect x="0" y="18.8" width="10.5" height="1.8" fill="#222"/>
<path d="M3.3 5 L6.8 6.5 L3.3 8 Z" fill="#45c24c"/>
<rect x="2.8" y="4.5" width="4.5" height="4" fill="#45c24c" opacity="0.6"/>
<rect x="9.5" y="3" width="7.5" height="7" fill="#2f7fe0"/>
<rect x="12" y="0" width="2.5" height="3" fill="#2f7fe0"/>
<path d="M11 6.5 h2 M14.5 5 v3" stroke="#cfe6ff" stroke-width="0.9"/>
</svg></div>
<div style="position:absolute;left:146.70px;top:546.40px;font-size:15px;font-weight:400;line-height:20px;letter-spacing:-0.211px;color:#111;white-space:nowrap">Software components</div>
<svg style="position:absolute;left:103px;top:574.0px" width="8" height="10" viewBox="0 0 8 10"><path d="M2.5 2 L5.5 5 L2.5 8" fill="none" stroke="#8a8a8a" stroke-width="1"/></svg>
<div style="position:absolute;left:124px;top:568.0px;line-height:0"><svg width="14" height="21" viewBox="0 0 14 21">
<path d="M0.5 3 Q0.5 0.5 3 0.5 H10 Q12.5 0.5 12.5 3 V19.8 H0.5 Z" fill="#a2a2a2" stroke="#8c8c8c" stroke-width="0.8"/>
<path d="M6 1 H11 Q12 1 12 3 V19.3 H8 Z" fill="#8e8e8e" opacity="0.6"/>
<rect x="6" y="6" width="2" height="2" fill="#3a9af0"/>
</svg></div>
<div style="position:absolute;left:146.70px;top:568.90px;font-size:15px;font-weight:400;line-height:20px;letter-spacing:-0.440px;color:#111;white-space:nowrap">Software devices</div>
<svg style="position:absolute;left:102px;top:598.5px" width="10" height="8" viewBox="0 0 10 8"><path d="M2 2 L5 5 L8 2" fill="none" stroke="#606060" stroke-width="1.1"/></svg>
<div style="position:absolute;left:124px;top:590.0px;line-height:0"><svg width="13" height="21" viewBox="0 0 13 21">
<rect x="0.5" y="6" width="4.5" height="9" fill="#9a9a9a" stroke="#6e6e6e" stroke-width="0.6"/>
<rect x="1.2" y="7" width="1.5" height="7" fill="#d0d0d0"/>
<path d="M5 6 L10.5 0.5 V20.5 L5 15 Z" fill="#c8c8c8" stroke="#7a7a7a" stroke-width="0.6"/>
<path d="M6 6.5 L8 4.5 V16.5 L6 14.5 Z" fill="#e8e8e8"/>
<rect x="9.5" y="1" width="2.3" height="19" fill="#8a8a8a"/>
</svg></div>
<div style="position:absolute;left:146.70px;top:591.40px;font-size:15px;font-weight:400;line-height:20px;letter-spacing:-0.156px;color:#111;white-space:nowrap">Sound, video and game controllers</div>
<div style="position:absolute;left:142px;top:611.5px;width:199px;height:22px;background:#cce8ff"></div>
<div style="position:absolute;left:148px;top:613.0px;line-height:0"><svg width="19" height="21" viewBox="0 0 19 21">
<rect x="0.5" y="5" width="4" height="8" fill="#a8a8a8" stroke="#8a8a8a" stroke-width="0.5"/>
<path d="M4.5 5 L10.5 0.5 V17 L4.5 13 Z" fill="#d2d2d2" stroke="#8a8a8a" stroke-width="0.6"/>
<circle cx="9" cy="12.2" r="5.6" fill="#f6f6f6" stroke="#8e8e8e" stroke-width="1"/>
<path d="M9 8.8 V14.8 M6.4 12.2 L9 15 L11.6 12.2" fill="none" stroke="#1e1e1e" stroke-width="1.5"/>
</svg></div>
<div style="position:absolute;left:170.70px;top:613.90px;font-size:15px;font-weight:400;line-height:20px;letter-spacing:-0.310px;color:#111;white-space:nowrap">Conexant SmartAudio HD</div>
<div style="position:absolute;left:148px;top:635.0px;line-height:0"><svg width="13" height="21" viewBox="0 0 13 21">
<rect x="0.5" y="6" width="4.5" height="9" fill="#9a9a9a" stroke="#6e6e6e" stroke-width="0.6"/>
<rect x="1.2" y="7" width="1.5" height="7" fill="#d0d0d0"/>
<path d="M5 6 L10.5 0.5 V20.5 L5 15 Z" fill="#c8c8c8" stroke="#7a7a7a" stroke-width="0.6"/>
<path d="M6 6.5 L8 4.5 V16.5 L6 14.5 Z" fill="#e8e8e8"/>
<rect x="9.5" y="1" width="2.3" height="19" fill="#8a8a8a"/>
</svg></div>
<div style="position:absolute;left:170.70px;top:636.40px;font-size:15px;font-weight:400;line-height:20px;letter-spacing:-0.473px;color:#111;white-space:nowrap">Intel(R) Display</div>
<svg style="position:absolute;left:103px;top:664.0px" width="8" height="10" viewBox="0 0 8 10"><path d="M2.5 2 L5.5 5 L2.5 8" fill="none" stroke="#8a8a8a" stroke-width="1"/></svg>
<div style="position:absolute;left:121px;top:659.0px;line-height:0"><svg width="21" height="20" viewBox="0 0 21 20">
<path d="M6.4 0.6 L1.4 5.4 L6.4 10.2" fill="none" stroke="#4a4a4a" stroke-width="1.6"/>
<path d="M7.6 5.4 H12" stroke="#4a4a4a" stroke-width="1.3"/>
<rect x="1.1" y="10.2" width="7.6" height="5.2" fill="#6a6a6a"/>
<rect x="7" y="8.6" width="12.3" height="7.1" fill="#2f6a44"/>
<rect x="8" y="9.2" width="1" height="1" fill="#45c24c"/><rect x="10.5" y="9.2" width="1" height="1" fill="#45c24c"/><rect x="13" y="9.2" width="1" height="1" fill="#45c24c"/>
<rect x="11" y="11.5" width="3" height="2.2" fill="#3a3a3a"/>
<rect x="8.4" y="16" width="7.6" height="2.6" fill="#eaa52e"/>
<rect x="18.1" y="6.3" width="1.8" height="12" fill="#b0b0b0"/>
</svg></div>
<div style="position:absolute;left:146.70px;top:658.90px;font-size:15px;font-weight:400;line-height:20px;letter-spacing:-0.211px;color:#111;white-space:nowrap">Storage controllers</div>
<svg style="position:absolute;left:103px;top:686.5px" width="8" height="10" viewBox="0 0 8 10"><path d="M2.5 2 L5.5 5 L2.5 8" fill="none" stroke="#8a8a8a" stroke-width="1"/></svg>
<div style="position:absolute;left:121px;top:681.5px;line-height:0"><svg width="21" height="19" viewBox="0 0 21 19">
<rect x="0.2" y="0" width="8" height="15.8" fill="#8a8a8a"/>
<rect x="1" y="0.8" width="6.4" height="14.2" fill="#3e3e3e"/>
<rect x="2.2" y="1.8" width="2" height="1" fill="#45c24c"/>
<rect x="1.5" y="4" width="5" height="0.8" fill="#777"/>
<rect x="5.6" y="4.9" width="14" height="10" fill="#59acf3" stroke="#2b6fc8" stroke-width="0.9"/>
<path d="M7 7 h3 M8 9 h5 M11 11 h4 M7 12.5 h3" stroke="#a8d6ff" stroke-width="0.8"/>
<rect x="8.7" y="16" width="7" height="1.2" fill="#6a8ab8"/>
</svg></div>
<div style="position:absolute;left:146.70px;top:681.40px;font-size:15px;font-weight:400;line-height:20px;letter-spacing:-0.600px;color:#111;white-space:nowrap">System devices</div>
<svg style="position:absolute;left:103px;top:709.0px" width="8" height="10" viewBox="0 0 8 10"><path d="M2.5 2 L5.5 5 L2.5 8" fill="none" stroke="#8a8a8a" stroke-width="1"/></svg>
<div style="position:absolute;left:126px;top:703.0px;line-height:0"><svg width="10" height="20" viewBox="0 0 10 20">
<rect x="2" y="0.5" width="6" height="5" fill="#d0d0d0" stroke="#666" stroke-width="0.8"/>
<path d="M1 5 H9 V13 L6.5 15 H3.5 L1 13 Z" fill="#4a4a4a"/>
<rect x="3" y="15" width="4" height="5" fill="#2e2e2e"/>
</svg></div>
<div style="position:absolute;left:146.70px;top:703.90px;font-size:15px;font-weight:400;line-height:20px;letter-spacing:-0.400px;color:#111;white-space:nowrap">Universal Serial Bus controllers</div>
  <!-- status bar -->
  <div class="abs" style="left:67px;top:738px;width:974px;height:31px;background:#f0f0f0;border-radius:0 0 8px 8px;border-top:1px solid #dadada;box-shadow:inset 0 1px 0 #fbfbfb;box-sizing:border-box"></div>
  <div class="abs" style="left:765px;top:742px;width:1px;height:26px;background:repeating-linear-gradient(180deg,#d4d4d4 0 2px,#f0f0f0 2px 3px)"></div>
  <div class="abs" style="left:931px;top:742px;width:1px;height:26px;background:#dcdcdc"></div>
  <div style="position:absolute;left:69.50px;top:746.30px;font-size:15px;font-weight:400;line-height:20px;letter-spacing:-0.407px;color:#000;white-space:nowrap">Enables the selected device.</div>
</div>

<!-- context menu -->
<div class="abs" style="left:269.5px;top:631px;width:293.5px;height:167px;background:#f9f9f9;border-radius:8px;box-shadow:0 3px 8px rgba(0,0,0,0.16);border:1px solid #e0e0e0;box-sizing:border-box"></div>
<div class="abs" style="left:279px;top:665px;width:274px;height:22px;background:#0078d4;border-radius:3px"></div>
<div style="position:absolute;left:315.90px;top:639.98px;font-size:14.5px;font-weight:400;line-height:20px;letter-spacing:0.225px;color:#1a1a1a;white-space:nowrap">Update driver</div><div style="position:absolute;left:316.00px;top:667.38px;font-size:14.5px;font-weight:400;line-height:20px;letter-spacing:-0.117px;color:#fff;white-space:nowrap">Enable device</div><div style="position:absolute;left:316.00px;top:694.78px;font-size:14.5px;font-weight:400;line-height:20px;letter-spacing:0.133px;color:#1a1a1a;white-space:nowrap">Uninstall device</div>
<div class="abs" style="left:318px;top:721px;width:234px;height:1px;background:#e0e0e0"></div>
<div style="position:absolute;left:316.00px;top:733.98px;font-size:14.5px;font-weight:400;line-height:20px;letter-spacing:-0.133px;color:#1a1a1a;white-space:nowrap">Scan for hardware changes</div>
<div class="abs" style="left:318px;top:760px;width:234px;height:1px;background:#e0e0e0"></div>
<div class="abs" style="left:311px;top:791px;width:242px;height:4px;background:#f0f0f0"></div>
<div style="position:absolute;left:316.00px;top:772.48px;font-size:14.5px;font-weight:700;line-height:20px;letter-spacing:-0.156px;color:#000;white-space:nowrap">Properties</div>
</body></html>
